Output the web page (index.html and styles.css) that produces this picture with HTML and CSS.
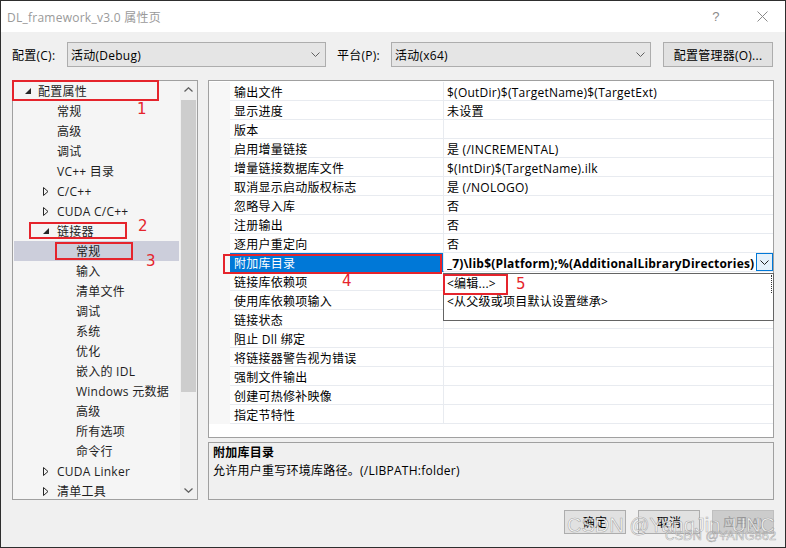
FILE: index.html
```html
<!DOCTYPE html>
<html lang="zh-CN">
<head>
<meta charset="utf-8">
<title>DL_framework_v3.0 属性页</title>
<link rel="stylesheet" href="styles.css">
</head>
<body>
<div class="window">
  <div class="titlebar">
    <span class="title">DL_framework_v3.0 属性页</span>
    <span class="tb-btn help">?</span>
    <span class="tb-btn close"><svg width="11" height="11" viewBox="0 0 11 11"><path d="M0.5 0.5 L10.5 10.5 M10.5 0.5 L0.5 10.5" stroke="#8a8a8a" stroke-width="1" fill="none"/></svg></span>
  </div>

  <div class="config-row">
    <span class="lbl lbl-cfg">配置(C):</span>
    <div class="combo combo-cfg"><span class="combo-text">活动(Debug)</span><svg class="chev" width="9" height="5" viewBox="0 0 9 5"><path d="M0.5 0.5 L4.5 4.5 L8.5 0.5" stroke="#606060" fill="none"/></svg></div>
    <span class="lbl lbl-plat">平台(P):</span>
    <div class="combo combo-plat"><span class="combo-text">活动(x64)</span><svg class="chev" width="9" height="5" viewBox="0 0 9 5"><path d="M0.5 0.5 L4.5 4.5 L8.5 0.5" stroke="#606060" fill="none"/></svg></div>
    <button class="btn btn-mgr">配置管理器(O)...</button>
  </div>

  <div class="main">
    <div class="tree">
      <div class="tree-items">
        <div class="row l1"><span class="tw"><svg width="6" height="6" viewBox="0 0 6 6"><polygon points="6,0 6,6 0,6" fill="#262626"/></svg></span>配置属性</div>
        <div class="row l2"><span class="tw"></span>常规</div>
        <div class="row l2"><span class="tw"></span>高级</div>
        <div class="row l2"><span class="tw"></span>调试</div>
        <div class="row l2"><span class="tw"></span>VC++ 目录</div>
        <div class="row l2"><span class="tw"><svg width="6" height="9" viewBox="0 0 6 9"><polygon points="0.5,0.5 5,4.5 0.5,8.5" fill="none" stroke="#262626"/></svg></span>C/C++</div>
        <div class="row l2"><span class="tw"><svg width="6" height="9" viewBox="0 0 6 9"><polygon points="0.5,0.5 5,4.5 0.5,8.5" fill="none" stroke="#262626"/></svg></span>CUDA C/C++</div>
        <div class="row l2"><span class="tw"><svg width="6" height="6" viewBox="0 0 6 6"><polygon points="6,0 6,6 0,6" fill="#262626"/></svg></span>链接器</div>
        <div class="row l3 sel"><span class="tw"></span>常规</div>
        <div class="row l3"><span class="tw"></span>输入</div>
        <div class="row l3"><span class="tw"></span>清单文件</div>
        <div class="row l3"><span class="tw"></span>调试</div>
        <div class="row l3"><span class="tw"></span>系统</div>
        <div class="row l3"><span class="tw"></span>优化</div>
        <div class="row l3"><span class="tw"></span>嵌入的 IDL</div>
        <div class="row l3"><span class="tw"></span>Windows 元数据</div>
        <div class="row l3"><span class="tw"></span>高级</div>
        <div class="row l3"><span class="tw"></span>所有选项</div>
        <div class="row l3"><span class="tw"></span>命令行</div>
        <div class="row l2"><span class="tw"><svg width="6" height="9" viewBox="0 0 6 9"><polygon points="0.5,0.5 5,4.5 0.5,8.5" fill="none" stroke="#262626"/></svg></span>CUDA Linker</div>
        <div class="row l2"><span class="tw"><svg width="6" height="9" viewBox="0 0 6 9"><polygon points="0.5,0.5 5,4.5 0.5,8.5" fill="none" stroke="#262626"/></svg></span>清单工具</div>
      </div>
      <div class="vscroll">
        <div class="sb-arrow"><svg width="9" height="5" viewBox="0 0 9 5"><path d="M0.5 4.5 L4.5 0.8 L8.5 4.5" stroke="#606060" stroke-width="1.3" fill="none"/></svg></div>
        <div class="sb-thumb"></div>
        <div class="sb-arrow sb-down"><svg width="9" height="5" viewBox="0 0 9 5"><path d="M0.5 0.5 L4.5 4.2 L8.5 0.5" stroke="#606060" stroke-width="1.3" fill="none"/></svg></div>
      </div>
    </div>

    <div class="right">
      <div class="grid">
        <div class="grid-inner">
          <div class="prow"><span class="gut"></span><span class="pname">输出文件</span><span class="pval">$(OutDir)$(TargetName)$(TargetExt)</span></div>
          <div class="prow"><span class="gut"></span><span class="pname">显示进度</span><span class="pval">未设置</span></div>
          <div class="prow"><span class="gut"></span><span class="pname">版本</span><span class="pval"></span></div>
          <div class="prow"><span class="gut"></span><span class="pname">启用增量链接</span><span class="pval">是 (/INCREMENTAL)</span></div>
          <div class="prow"><span class="gut"></span><span class="pname">增量链接数据库文件</span><span class="pval">$(IntDir)$(TargetName).ilk</span></div>
          <div class="prow"><span class="gut"></span><span class="pname">取消显示启动版权标志</span><span class="pval">是 (/NOLOGO)</span></div>
          <div class="prow"><span class="gut"></span><span class="pname">忽略导入库</span><span class="pval">否</span></div>
          <div class="prow"><span class="gut"></span><span class="pname">注册输出</span><span class="pval">否</span></div>
          <div class="prow"><span class="gut"></span><span class="pname">逐用户重定向</span><span class="pval">否</span></div>
          <div class="prow psel"><span class="gut"></span><span class="pname">附加库目录</span><span class="pval"><span class="vtext">_7)\lib$(Platform);%(AdditionalLibraryDirectories)</span><span class="ddbtn"><svg width="9" height="5" viewBox="0 0 9 5"><path d="M0.5 0.5 L4.5 4.5 L8.5 0.5" stroke="#1e1e1e" fill="none"/></svg></span></span></div>
          <div class="prow"><span class="gut"></span><span class="pname">链接库依赖项</span><span class="pval"></span></div>
          <div class="prow"><span class="gut"></span><span class="pname">使用库依赖项输入</span><span class="pval"></span></div>
          <div class="prow"><span class="gut"></span><span class="pname">链接状态</span><span class="pval"></span></div>
          <div class="prow"><span class="gut"></span><span class="pname">阻止 Dll 绑定</span><span class="pval"></span></div>
          <div class="prow"><span class="gut"></span><span class="pname">将链接器警告视为错误</span><span class="pval"></span></div>
          <div class="prow"><span class="gut"></span><span class="pname">强制文件输出</span><span class="pval"></span></div>
          <div class="prow"><span class="gut"></span><span class="pname">创建可热修补映像</span><span class="pval"></span></div>
          <div class="prow"><span class="gut"></span><span class="pname">指定节特性</span><span class="pval"></span></div>
        </div>
      </div>
      <div class="desc">
        <div class="desc-title">附加库目录</div>
        <div class="desc-text">允许用户重写环境库路径。(/LIBPATH:folder)</div>
      </div>
    </div>
  </div>

  <div class="buttons">
    <button class="btn btn-dlg">确定</button>
    <button class="btn btn-dlg">取消</button>
    <button class="btn btn-dlg disabled">应用(A)</button>
  </div>

  <div class="dropdown">
    <div class="dd-item first">&lt;编辑...&gt;</div>
    <div class="dd-item">&lt;从父级或项目默认设置继承&gt;</div>
  </div>

  <div class="mark m1"></div>
  <div class="mark m2"></div>
  <div class="mark m3"></div>
  <div class="mark m4"></div>
  <div class="mark m5"></div>
  <div class="num n1">1</div>
  <div class="num n2">2</div>
  <div class="num n3">3</div>
  <div class="num n4">4</div>
  <div class="num n5">5</div>

  <div class="wm wm1">CSDN @YangJin_UNC</div>
  <div class="wm wm2">CSDN @YANG862</div>
</div>
</body>
</html>
```

FILE: styles.css
```css
* { box-sizing: border-box; }

body {
  margin: 0;
  font-family: "Open Sans", "Noto Sans CJK SC", sans-serif;
  font-size: 12px;
  letter-spacing: 0.25px;
  color: #000;
}

.window {
  position: relative;
  width: 786px;
  height: 548px;
  border: 1px solid #2e2e2e;
  background: #f0f0f0;
  display: flex;
  flex-direction: column;
  overflow: hidden;
}

/* title bar */
.titlebar {
  flex: none;
  height: 31px;
  background: #fff;
  display: flex;
  align-items: center;
  padding-left: 6px;
  color: #9a9a9a;
  font-size: 12px;
}
.title { flex: 1; }
.tb-btn {
  width: 46px;
  height: 31px;
  display: flex;
  align-items: center;
  justify-content: center;
}
.help { font-size: 13px; color: #8a8a8a; font-family: "Liberation Sans", sans-serif; }

/* config row */
.config-row {
  flex: none;
  display: flex;
  align-items: center;
  height: 25px;
  margin-top: 10px;
  padding-left: 11px;
}
.lbl { flex: none; }
.lbl-cfg { width: 55px; }
.lbl-plat { width: 54px; margin-left: 11px; }
.combo {
  flex: none;
  height: 25px;
  border: 1px solid #adadad;
  background: #e5e5e5;
  display: flex;
  align-items: center;
  padding-left: 3px;
  padding-right: 5px;
}
.combo-cfg { width: 259px; }
.combo-plat { width: 260px; }
.combo-text { flex: 1; }
.chev { flex: none; }

.btn {
  font-family: inherit;
  font-size: 12px;
  letter-spacing: inherit;
  color: #000;
  background: #e1e1e1;
  border: 1px solid #adadad;
  padding: 0;
  margin: 0;
}
.btn-mgr { width: 110px; height: 25px; margin-left: 12px; }

/* main */
.main {
  flex: none;
  display: flex;
  gap: 10px;
  height: 420px;
  margin-top: 13px;
  padding-left: 11px;
}

.tree {
  width: 186px;
  height: 420px;
  border: 1px solid #a0a0a0;
  background: #f5f5f5;
  display: flex;
}
.tree-items {
  width: 167px;
  overflow: hidden;
  color: #1e1e1e;
}
.row {
  height: 20px;
  display: flex;
  align-items: center;
  margin: 0 1px;
  white-space: nowrap;
}
.row.l1 { padding-left: 10px; }
.row.l2 { padding-left: 29px; }
.row.l3 { padding-left: 48px; }
.row.sel { background: #cccedb; }
.tw {
  width: 14px;
  flex: none;
  display: flex;
  align-items: center;
}
.l1 .tw { padding-left: 1px; }

.vscroll {
  width: 17px;
  background: #f0f0f0;
  display: flex;
  flex-direction: column;
  align-items: center;
}
.sb-arrow {
  height: 17px;
  width: 17px;
  display: flex;
  align-items: center;
  justify-content: center;
  flex: none;
}
.sb-thumb {
  width: 15px;
  height: 292px;
  margin-top: 2px;
  background: #cdcdcd;
}
.sb-down { margin-top: auto; }

/* right pane */
.right {
  width: 566px;
  display: flex;
  flex-direction: column;
  gap: 4px;
}
.grid {
  height: 358px;
  border: 1px solid #a0a0a0;
  background: #fff;
}
.grid-inner { padding-top: 1px; }
.prow {
  height: 19px;
  display: flex;
}
.gut {
  width: 21px;
  flex: none;
  background: #f7f7f7;
}
.pname {
  width: 214px;
  flex: none;
  padding: 2px 0 0 4px;
  border-right: 1px solid #e8ebf0;
  border-bottom: 1px solid #e8ebf0;
  display: flex;
  align-items: center;
  white-space: nowrap;
}
.pval {
  flex: 1;
  min-width: 0;
  padding: 2px 0 0 3px;
  border-bottom: 1px solid #e8ebf0;
  display: flex;
  align-items: center;
  white-space: nowrap;
  overflow: hidden;
}
.psel .pname {
  background: #0078d7;
  color: #fff;
  border-bottom-color: #0078d7;
}
.psel .pval { padding-top: 0; }
.psel .pval .vtext { padding-top: 2px; }
.vtext {
  flex: 1;
  font-weight: bold;
  overflow: hidden;
  letter-spacing: 0.2px;
}
.ddbtn {
  flex: none;
  width: 17px;
  height: 18px;
  border: 1px solid #0078d7;
  background: #e5f1fb;
  display: flex;
  align-items: center;
  justify-content: center;
}

.desc {
  height: 58px;
  border: 1px solid #a0a0a0;
  background: #f0f0f0;
  padding: 1px 0 0 4px;
  line-height: 18px;
}
.desc-title { font-weight: bold; }

/* dialog buttons */
.buttons {
  flex: none;
  display: flex;
  justify-content: flex-end;
  gap: 12px;
  margin-top: 10px;
  padding-right: 11px;
}
.btn-dlg { width: 62px; height: 24px; }
.btn-dlg.disabled { color: #9a9a9a; background: #cccccc; border-color: #bfbfbf; }

/* dropdown overlay */
.dropdown {
  position: absolute;
  left: 442px;
  top: 272px;
  width: 331px;
  height: 48px;
  border: 1px solid #646464;
  background: #fff;
  padding-top: 1px;
}
.dd-item {
  height: 18px;
  line-height: 18px;
  padding-left: 3px;
}
.dd-item.first { border-right: 1px dotted #333; margin-right: 1px; }

/* red annotations */
.mark {
  position: absolute;
  border: 2px solid #e5242c;
}
.m1 { left: 11px; top: 79px; width: 147px; height: 21px; }
.m2 { left: 28px; top: 221px; width: 98px; height: 17px; }
.m3 { left: 54px; top: 241px; width: 78px; height: 18px; }
.m4 { left: 222px; top: 253px; width: 219px; height: 20px; }
.m5 { left: 442px; top: 273px; width: 65px; height: 21px; }

.num {
  position: absolute;
  color: #e5242c;
  font-family: "DejaVu Sans", sans-serif;
  font-size: 15px;
  line-height: 18px;
  letter-spacing: 0;
}
.n1 { left: 136px; top: 99px; }
.n2 { left: 137px; top: 216px; }
.n3 { left: 145px; top: 251px; }
.n4 { left: 341px; top: 271px; }
.n5 { left: 515px; top: 274px; }

/* watermark */
.wm {
  position: absolute;
  font-family: "Liberation Sans", sans-serif;
  letter-spacing: 0;
  color: rgba(255, 255, 255, 0.75);
  -webkit-text-stroke: 0.6px rgba(110, 110, 110, 0.55);
  white-space: nowrap;
}
.wm1 { left: 566px; top: 513px; font-size: 20px; }
.wm2 { left: 664px; top: 527px; font-size: 13px; }
```
